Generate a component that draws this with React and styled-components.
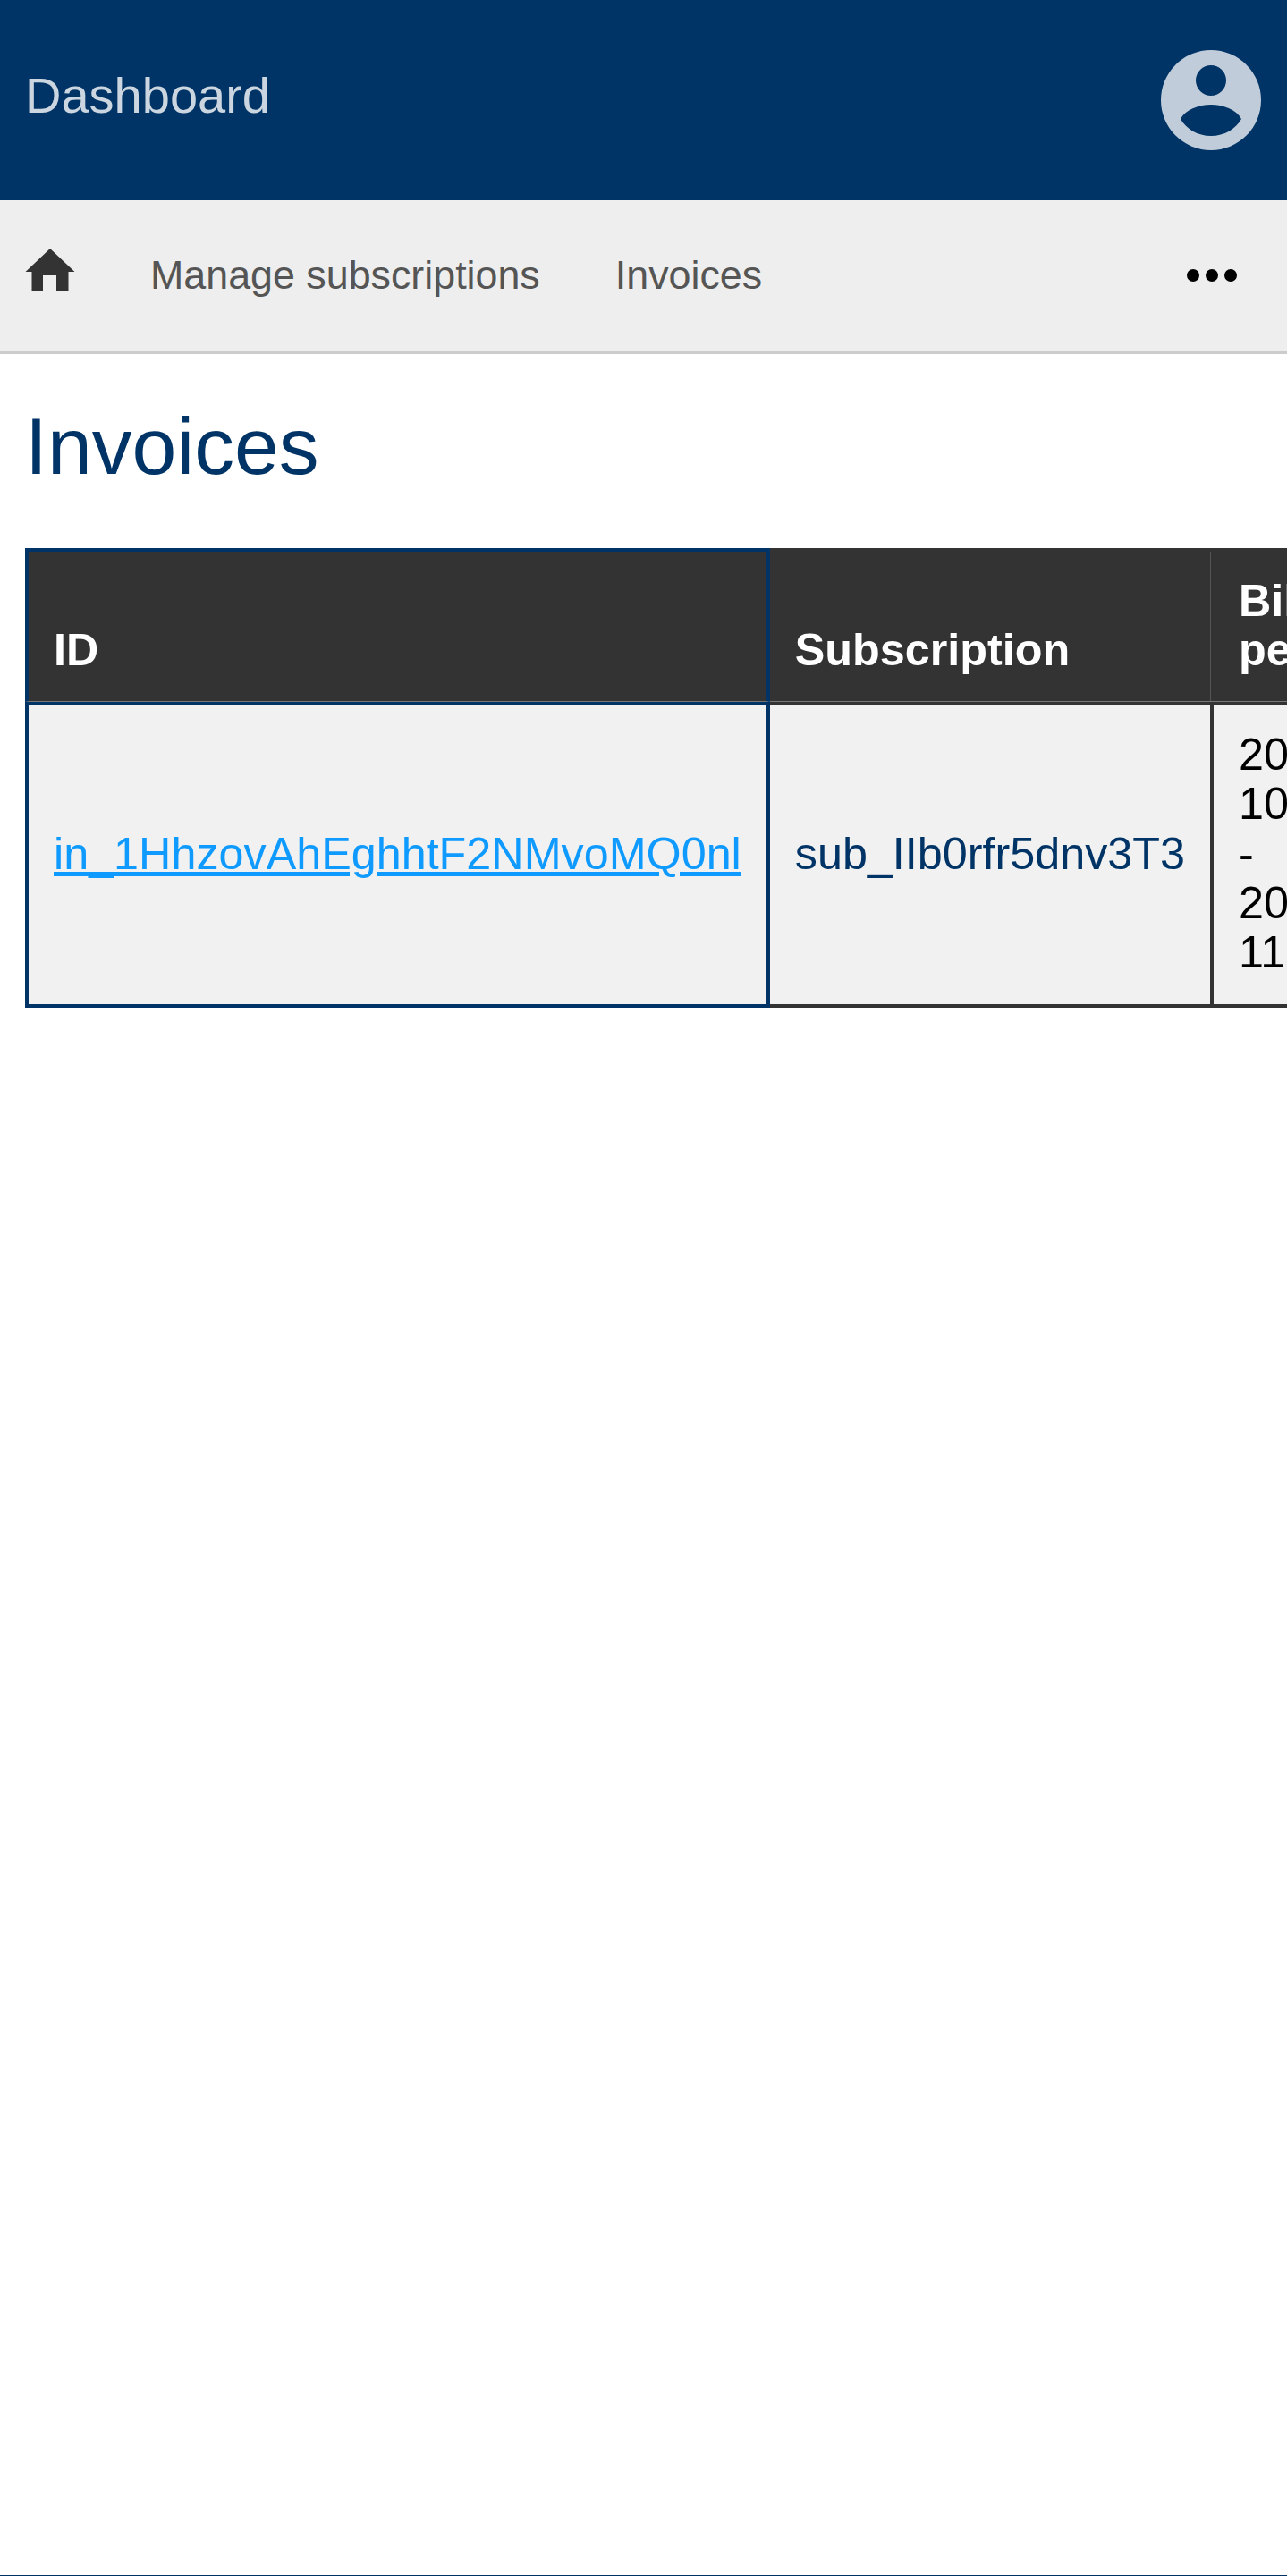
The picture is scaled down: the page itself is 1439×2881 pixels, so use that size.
import React from "react";
import styled, { createGlobalStyle } from "styled-components";

const GlobalStyle = createGlobalStyle`
  html, body {
    margin: 0;
    padding: 0;
    background: #fff;
    font-family: "Liberation Sans", Arial, sans-serif;
    overflow-x: hidden;
  }
  * {
    box-sizing: border-box;
  }
`;

function App() {
  return (
    <Page>
      <GlobalStyle />
      <Header>
        <Brand>Dashboard</Brand>
        <svg width="112" height="112" viewBox="0 0 112 112">
          <path
            fill="#c0ccd9"
            fillRule="evenodd"
            d="M56 0a56 56 0 1 0 0 112a56 56 0 1 0 0-112zM56 17a17 17 0 1 1 0 34a17 17 0 1 1 0-34zM22 77C27 67 42 61 56 61s29 6 34 16C84 88 71 96 56 96S28 88 22 77z"
          />
        </svg>
      </Header>
      <Nav>
        <NavLinks>
          <HomeLink>
            <svg width="56" height="48" viewBox="0 0 56 48">
              <path
                fill="#333"
                d="M28 0L55.500 26H48.500V48H35V30H20V48H7.500V26H0.500z"
              />
            </svg>
          </HomeLink>
          <NavLink>Manage subscriptions</NavLink>
          <NavLink>Invoices</NavLink>
        </NavLinks>
        <Dots>
          <Dot />
          <Dot />
          <Dot />
        </Dots>
      </Nav>
      <Main>
        <Title>Invoices</Title>
        <TableWrap>
          <Table>
            <thead>
              <tr>
                <FirstTh>ID</FirstTh>
                <Th>Subscription</Th>
                <Th>Billing period</Th>
              </tr>
            </thead>
            <tbody>
              <tr>
                <FirstTd>
                  <InvoiceLink href="#invoice">
                    in_1HhzovAhEghhtF2NMvoMQ0nl
                  </InvoiceLink>
                </FirstTd>
                <SubTd>sub_IIb0rfr5dnv3T3</SubTd>
                <Td>2020-10-28 - 2020-11-28</Td>
              </tr>
            </tbody>
          </Table>
        </TableWrap>
      </Main>
      <FooterLine />
    </Page>
  );
}

export default App;

const Page = styled.div`
  min-height: 2881px;
  display: flex;
  flex-direction: column;
`;
const Header = styled.header`
  height: 224px;
  background: #003466;
  display: flex;
  justify-content: space-between;
  align-items: center;
  padding: 0 29px 0 28px;
`;
const Brand = styled.div`
  font-size: 56px;
  color: #ccd6e0;
  margin-bottom: 11px;
`;
const Nav = styled.nav`
  height: 172px;
  background: #eee;
  border-bottom: 4px solid #ccc;
  display: flex;
  justify-content: space-between;
  align-items: center;
  padding: 0 56px 0 28px;
`;
const NavLinks = styled.div`
  display: flex;
  align-items: center;
  gap: 84px;
`;
const HomeLink = styled.div`
  display: flex;
  margin-bottom: 12px;
`;
const NavLink = styled.a`
  font-size: 44.800px;
  color: #555;
  margin-bottom: 2px;
`;
const Dots = styled.div`
  display: flex;
  gap: 7px;
`;
const Dot = styled.span`
  width: 14px;
  height: 14px;
  border-radius: 50%;
  background: #000;
`;
const Main = styled.main`
  padding: 0 0 0 28px;
`;
const Title = styled.h1`
  margin: 52px 0 63px;
  font-size: 89.600px;
  font-weight: 400;
  line-height: 102px;
  color: #003466;
`;
const TableWrap = styled.div`
  overflow: hidden;
`;
const Table = styled.table`
  border-collapse: separate;
  border-spacing: 0;
  font-size: 50.300px;
  line-height: 55.400px;
`;
const Th = styled.th`
  background: #333;
  color: #fff;
  font-weight: 700;
  text-align: left;
  vertical-align: bottom;
  padding: 27px 32px 29px 28px;
  border-top: 4px solid #333;
  border-bottom: 1px solid #777;
  box-shadow: inset -3px 0 0 #333, inset -4px 0 0 #555;
`;
const FirstTh = styled(Th)`
  padding-right: 28px;
  border: 4px solid #003466;
  border-bottom: 1px solid #777;
  box-shadow: none;
`;
const Td = styled.td`
  background: #f1f1f1;
  color: #000;
  vertical-align: middle;
  padding: 27px 28px 30px;
  border-top: 4px solid #333;
  border-right: 4px solid #333;
  border-bottom: 4px solid #333;
`;
const FirstTd = styled(Td)`
  border: 4px solid #003466;
`;
const SubTd = styled(Td)`
  color: #003466;
`;
const InvoiceLink = styled.a`
  color: #0f9aff;
`;
const FooterLine = styled.div`
  margin-top: auto;
  height: 1px;
  background: #003466;
`;
